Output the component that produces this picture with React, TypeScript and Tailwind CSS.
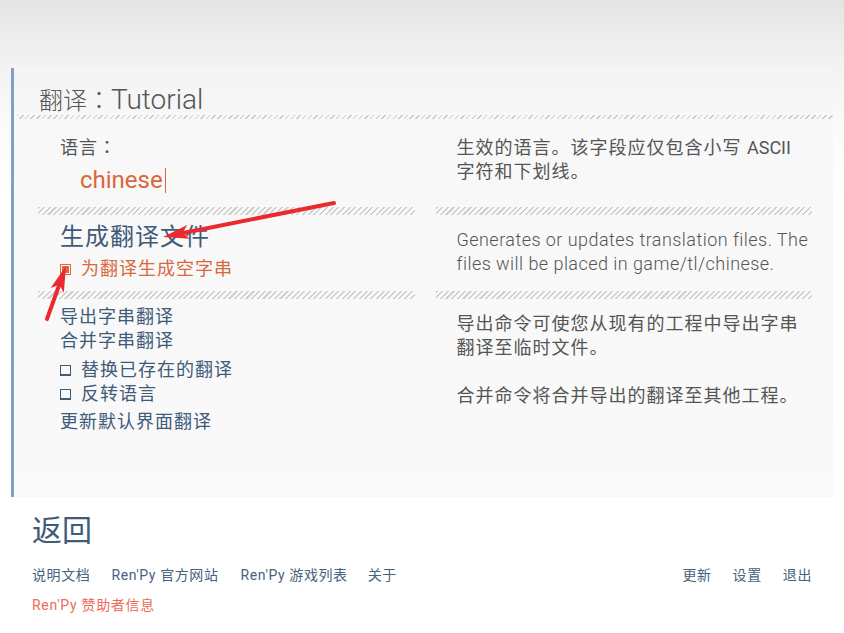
import React from "react";

const font = "font-['Roboto','Noto_Sans_CJK_SC',sans-serif]";
const tcColon = "font-['Noto_Sans_CJK_TC',sans-serif] leading-[0px]";
const hatch =
  "h-[8px] bg-[repeating-linear-gradient(135deg,#cfcfcf_0px,#cfcfcf_1.5px,transparent_1.5px,transparent_4px)]";
const titleHatch =
  "h-[4px] bg-[repeating-linear-gradient(135deg,#c8c8c8_0px,#c8c8c8_1px,transparent_1px,transparent_4px)]";

function Arrow({ x1, y1, x2, y2 }: { x1: number; y1: number; x2: number; y2: number }) {
  const dx = x2 - x1;
  const dy = y2 - y1;
  const len = Math.hypot(dx, dy);
  const ux = dx / len;
  const uy = dy / len;
  const headLen = 26;
  const headW = 7;
  const bx = x2 - ux * headLen;
  const by = y2 - uy * headLen;
  const px = -uy;
  const py = ux;
  const pts = `${x2},${y2} ${bx + px * headW},${by + py * headW} ${bx + ux * 6},${by + uy * 6} ${bx - px * headW},${by - py * headW}`;
  return (
    <g>
      <line x1={x1} y1={y1} x2={bx + ux * 8} y2={by + uy * 8} stroke="#ea2a2e" strokeWidth={4} strokeLinecap="round" />
      <polygon points={pts} fill="#ea2a2e" />
    </g>
  );
}

function Check({ on }: { on?: boolean }) {
  return on ? (
    <span className="w-[11px] h-[11px] border-[1.5px] border-[#d8693e] p-[1px] flex">
      <span className="flex-1 bg-[#d8693e]" />
    </span>
  ) : (
    <span className="w-[11px] h-[11px] border-[1.5px] border-b-[2px] border-[#3f5b7a]" />
  );
}

export default function App() {
  return (
    <div className={`relative w-[844px] h-[633px] overflow-hidden bg-white ${font}`}>
      <div className="bg-[linear-gradient(180deg,#e4e4e4_0px,#f3f3f3_68px,#fbfbfb_130px,#ffffff_200px)] pt-[68px] pl-[11px] pr-[11px]">
        {/* Main panel */}
        <div className="h-[429px] border-l-[3px] border-[#7ea2c4] bg-[linear-gradient(180deg,#f4f4f4_0px,#f8f8f8_60px,#f9f9f9_100%)] flex flex-col">
          <div className="h-[47px] pt-[20px] pl-[25px] text-[24px] leading-[27px] text-[#555555] font-light">
            翻译<span className={tcColon}>：</span>
            <span className="text-[28px] leading-[0px]">Tutorial</span>
          </div>
          <div className={`${titleHatch} ml-[3px]`} />

          <div className="pl-[24px] pr-[21px] flex flex-col">
            {/* Section 1 */}
            <div className="grid grid-cols-2 gap-[21px] h-[88px]">
              <div className="pt-[17px] pl-[22px]">
                <div className="text-[18px] leading-[24px] text-[#555555] tracking-[1px]">
                  语言<span className={tcColon}>：</span>
                </div>
                <div className="mt-[4px] pl-[20px] flex items-center text-[24px] leading-[32px] text-[#d8673d]">
                  chinese
                  <span className="ml-[2px] w-[1px] h-[25px] bg-[#d8673d]" />
                </div>
              </div>
              <div className="pt-[17px] pl-[21px] text-[18px] leading-[24px] text-[#555555] tracking-[1px]">
                生效的语言。该字段应仅包含小写 <span className="tracking-normal">ASCII</span>
                <br />
                字符和下划线。
              </div>
            </div>

            {/* Section 2 */}
            <div className="grid grid-cols-2 gap-[21px]">
              <div className={hatch} />
              <div className={hatch} />
            </div>
            <div className="grid grid-cols-2 gap-[21px] h-[76px]">
              <div className="pt-[6px] pl-[22px]">
                <div className="text-[24px] leading-[32px] text-[#3f5b7a] tracking-[1px]">生成翻译文件</div>
                <div className="mt-[4px] flex items-center gap-[10px] text-[18px] leading-[24px] text-[#d8693e] tracking-[1px]">
                  <Check on />
                  为翻译生成空字串
                </div>
              </div>
              <div className="pt-[13px] pl-[21px] text-[18px] leading-[24px] text-[#555555] font-light tracking-[0.45px]">
                Generates or updates translation files. The
                <br />
                files will be placed in game/tl/chinese.
              </div>
            </div>

            {/* Section 3 */}
            <div className="grid grid-cols-2 gap-[21px]">
              <div className={hatch} />
              <div className={hatch} />
            </div>
            <div className="grid grid-cols-2 gap-[21px]">
              <div className="pt-[6px] pl-[22px] text-[18px] leading-[24px] text-[#3f5b7a] tracking-[1px]">
                <div>导出字串翻译</div>
                <div>合并字串翻译</div>
                <div className="mt-[5px] flex items-center gap-[10px]">
                  <Check />
                  替换已存在的翻译
                </div>
                <div className="flex items-center gap-[10px]">
                  <Check />
                  反转语言
                </div>
                <div className="mt-[4px]">更新默认界面翻译</div>
              </div>
              <div className="pt-[13px] pl-[21px] text-[18px] leading-[24px] text-[#555555] tracking-[1px]">
                <div>导出命令可使您从现有的工程中导出字串</div>
                <div>翻译至临时文件。</div>
                <div className="h-[24px]" />
                <div>合并命令将合并导出的翻译至其他工程。</div>
              </div>
            </div>
          </div>
        </div>
      </div>

      {/* Bottom navigation */}
      <div className="px-[32px]">
        <div className="mt-[14px] text-[30px] leading-[40px] text-[#3f5b7a]">返回</div>
        <div className="mt-[14px] flex items-center justify-between text-[14px] leading-[20px] text-[#46627f] tracking-[0.6px]">
          <div className="flex">
            <span>说明文档</span>
            <span className="ml-[21px]">Ren'Py 官方网站</span>
            <span className="ml-[22px]">Ren'Py 游戏列表</span>
            <span className="ml-[20px]">关于</span>
          </div>
          <div className="flex gap-[21px]">
            <span>更新</span>
            <span>设置</span>
            <span>退出</span>
          </div>
        </div>
        <div className="mt-[10px] text-[14px] leading-[20px] text-[#f06a58] tracking-[0.7px]">Ren'Py 赞助者信息</div>
      </div>

      {/* Annotation arrows */}
      <svg className="absolute inset-0 pointer-events-none" width={844} height={633}>
        <Arrow x1={334} y1={203} x2={163} y2={237} />
        <Arrow x1={47} y1={319} x2={66} y2={266} />
      </svg>
    </div>
  );
}
